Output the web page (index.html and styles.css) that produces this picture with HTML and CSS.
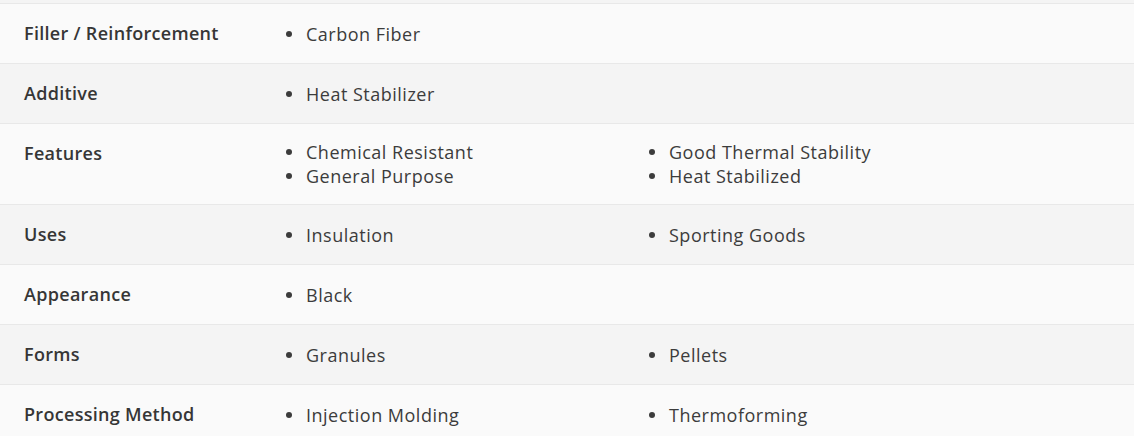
FILE: index.html
```html
<!DOCTYPE html>
<html lang="en">
<head>
<meta charset="utf-8">
<title>Properties</title>
<link rel="stylesheet" href="styles.css">
</head>
<body>
<div class="table">
  <div class="row row-even row-stub"></div>
  <div class="row row-odd">
    <div class="label">Filler / Reinforcement</div>
    <ul class="values"><li>Carbon Fiber</li></ul>
  </div>
  <div class="row row-even">
    <div class="label">Additive</div>
    <ul class="values"><li>Heat Stabilizer</li></ul>
  </div>
  <div class="row row-odd">
    <div class="label">Features</div>
    <ul class="values"><li>Chemical Resistant</li><li>Good Thermal Stability</li><li>General Purpose</li><li>Heat Stabilized</li></ul>
  </div>
  <div class="row row-even">
    <div class="label">Uses</div>
    <ul class="values"><li>Insulation</li><li>Sporting Goods</li></ul>
  </div>
  <div class="row row-odd">
    <div class="label">Appearance</div>
    <ul class="values"><li>Black</li></ul>
  </div>
  <div class="row row-even">
    <div class="label">Forms</div>
    <ul class="values"><li>Granules</li><li>Pellets</li></ul>
  </div>
  <div class="row row-odd">
    <div class="label">Processing Method</div>
    <ul class="values"><li>Injection Molding</li><li>Thermoforming</li></ul>
  </div>
</div>
</body>
</html>
```

FILE: styles.css
```css
html, body {
  margin: 0;
  padding: 0;
  background: #fafafa;
}
body {
  font-family: "Open Sans", "Liberation Sans", sans-serif;
  color: #3a3a3a;
}
.table {
  display: flex;
  flex-direction: column;
}
.row {
  display: flex;
  align-items: flex-start;
  padding: 16px 24px;
  border-bottom: 1px solid #e8e8e8;
}
.row-stub {
  padding: 0;
  height: 3px;
}
.row-odd { background: #fafafa; }
.row-even { background: #f4f4f4; }
.label {
  width: 259px;
  flex: none;
  font-size: 18px;
  font-weight: 600;
  line-height: 27px;
  letter-spacing: 0.3px;
  color: #363636;
}
.values {
  list-style: none;
  margin: 0;
  padding: 0;
  min-height: 27px;
  display: grid;
  grid-template-columns: 363px 363px;
  align-content: center;
}
.values li {
  position: relative;
  padding-left: 23px;
  font-size: 18px;
  line-height: 24px;
  letter-spacing: 0.5px;
  color: #3c3c3c;
}
.values li::before {
  content: "";
  position: absolute;
  left: 3px;
  top: 9px;
  width: 6px;
  height: 6px;
  border-radius: 50%;
  background: #3c3c3c;
}
```
